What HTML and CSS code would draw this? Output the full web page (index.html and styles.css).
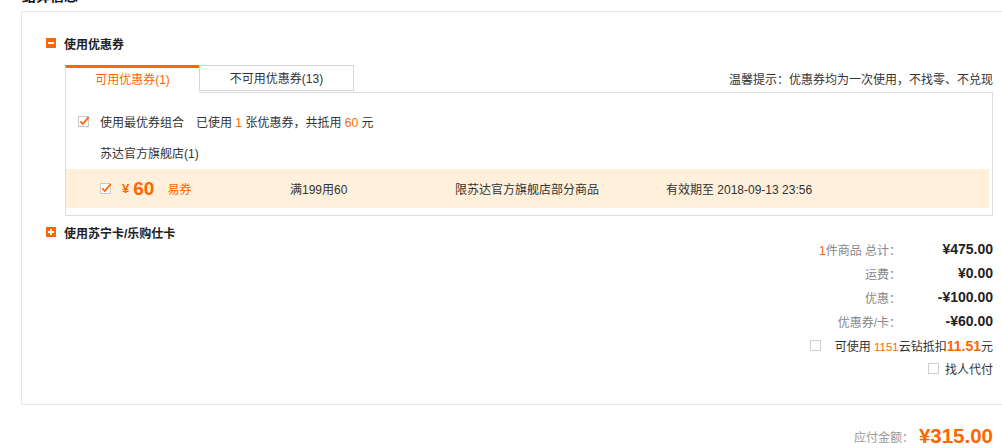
FILE: index.html
```html
<!DOCTYPE html>
<html lang="zh-CN">
<head>
<meta charset="utf-8">
<title>结算信息</title>
<link rel="stylesheet" href="styles.css">
</head>
<body>
<div class="page">
  <h2 class="page-title">结算信息</h2>
  <div class="panel">
    <div class="panel-inner">
      <div class="sec-head sec-first"><span class="ico ico-minus"></span>使用优惠券</div>
      <div class="coupon">
        <div class="tabs-row">
          <div class="tab tab-active">可用优惠券(1)</div>
          <div class="tab tab-idle">不可用优惠券(13)</div>
          <div class="tip">温馨提示：优惠券均为一次使用，不找零、不兑现</div>
        </div>
        <div class="tab-body">
          <div class="best-row">
            <svg class="cb" width="12" height="13" viewBox="0 0 12 13"><rect x="0.5" y="1.5" width="10" height="10" fill="#fff" stroke="#c8c8c8"/><path d="M2.3 6.4 L4.8 9 L10.6 2.2" stroke="#f60" stroke-width="1.8" fill="none"/></svg>
            <span class="best-txt">使用最优券组合</span>
            <span class="used">已使用 <em>1</em> 张优惠券，共抵用 <em>60</em> 元</span>
          </div>
          <div class="shop">苏达官方旗舰店(1)</div>
          <div class="coupon-item">
            <div class="ci-main">
              <svg class="cb" width="12" height="13" viewBox="0 0 12 13"><rect x="0.5" y="1.5" width="10" height="10" fill="#fff" stroke="#c8c8c8"/><path d="M2.3 6.4 L4.8 9 L10.6 2.2" stroke="#f60" stroke-width="1.8" fill="none"/></svg>
              <span class="ci-yen">¥</span><span class="ci-amt">60</span><span class="ci-type">易券</span>
            </div>
            <div>满199用60</div>
            <div>限苏达官方旗舰店部分商品</div>
            <div>有效期至 2018-09-13 23:56</div>
          </div>
        </div>
      </div>
      <div class="sec-head sec-second"><span class="ico ico-plus"></span>使用苏宁卡/乐购仕卡</div>
      <div class="summary">
        <div class="sum-row"><span class="label"><em>1</em>件商品 总计：</span><span class="value">¥475.00</span></div>
        <div class="sum-row"><span class="label">运费：</span><span class="value">¥0.00</span></div>
        <div class="sum-row"><span class="label">优惠：</span><span class="value">-¥100.00</span></div>
        <div class="sum-row"><span class="label">优惠券/卡：</span><span class="value">-¥60.00</span></div>
        <div class="opt-row"><span class="box"></span><span class="opt-txt">可使用 <em class="small">1151</em>云钻抵扣<em class="big">11.51</em>元</span></div>
        <div class="opt-row opt-last"><span class="box"></span><span class="opt-txt">找人代付</span></div>
      </div>
    </div>
  </div>
  <div class="pay-total"><span class="pay-label">应付金额：</span><strong class="pay-amt">¥315.00</strong></div>
</div>
</body>
</html>
```

FILE: styles.css
```css
html, body {
  margin: 0;
  padding: 0;
  background: #fff;
  overflow: hidden;
}
body {
  font-family: "Liberation Sans", "Noto Sans CJK SC", sans-serif;
  font-size: 12px;
  color: #333;
}
em {
  font-style: normal;
}
.page {
  margin-top: -12px;
  padding-left: 21px;
}
.page-title {
  margin: 0 0 7px 1px;
  height: 16px;
  font-size: 14px;
  line-height: 16px;
  font-weight: bold;
  color: #111;
}
.panel {
  border: 1px solid #e8e8e8;
  width: 1000px;
  height: 392px;
}
.panel-inner {
  margin-left: 24px;
  width: 947px;
}
.sec-head {
  display: flex;
  align-items: center;
  height: 20px;
  font-weight: bold;
  color: #222;
}
.sec-first {
  padding-top: 21px;
}
.sec-second {
  margin-top: 6px;
}
.ico {
  width: 10px;
  height: 10px;
  background: #f60;
  margin-right: 8px;
  position: relative;
  flex: none;
}
.ico::before {
  content: "";
  position: absolute;
  left: 2px;
  top: 4px;
  width: 6px;
  height: 2px;
  background: #fff;
}
.ico-plus::after {
  content: "";
  position: absolute;
  left: 4px;
  top: 2px;
  width: 2px;
  height: 6px;
  background: #fff;
}
.coupon {
  margin-top: 12px;
  margin-left: 19px;
  width: 928px;
}
.tabs-row {
  display: flex;
  align-items: flex-start;
}
.tab {
  text-align: center;
  box-sizing: border-box;
}
.tab-active {
  width: 134px;
  height: 28px;
  border-top: 3px solid #f60;
  border-left: 1px solid #ddd;
  line-height: 24px;
  color: #f60;
  background: #fff;
  margin-bottom: -1px;
  position: relative;
  z-index: 1;
}
.tab-idle {
  width: 155px;
  height: 26px;
  border: 1px solid #d6d6d6;
  padding-top: 2px;
  line-height: 22px;
  color: #333;
}
.tip {
  margin-left: auto;
  padding-top: 5px;
  line-height: 20px;
  color: #333;
}
.tab-body {
  border: 1px solid #ddd;
  padding-bottom: 7px;
}
.best-row {
  display: flex;
  align-items: center;
  height: 20px;
  margin-top: 18px;
  padding-left: 12px;
}
.cb {
  flex: none;
  display: block;
}
.best-txt {
  margin-left: 10px;
}
.used {
  margin-left: 12px;
}
.used em {
  color: #f60;
}
.shop {
  margin-top: 13px;
  height: 20px;
  line-height: 20px;
  padding-left: 34px;
}
.coupon-item {
  margin-top: 5px;
  margin-right: 3px;
  height: 39px;
  background: #fff0db;
  padding-left: 34px;
  display: grid;
  grid-template-columns: 190px 165px 211px 1fr;
  align-items: center;
}
.ci-main {
  display: flex;
  align-items: center;
}
.ci-yen {
  margin-left: 10px;
  font-family: "Liberation Sans", sans-serif;
  font-size: 13px;
  font-weight: bold;
  color: #f60;
}
.ci-amt {
  margin-left: 4px;
  font-family: "Liberation Sans", sans-serif;
  font-size: 19px;
  font-weight: bold;
  color: #f60;
}
.ci-type {
  margin-left: 13px;
  color: #f60;
}
.summary {
  margin-top: -5px;
}
.sum-row {
  display: flex;
  justify-content: flex-end;
  align-items: center;
  height: 24px;
}
.label {
  color: #888;
  text-align: right;
}
.label em {
  color: #f60;
}
.value {
  width: 92px;
  text-align: right;
  font-family: "Liberation Sans", sans-serif;
  font-size: 14px;
  font-weight: bold;
  color: #222;
}
.opt-row {
  display: flex;
  justify-content: flex-end;
  align-items: center;
  height: 24px;
}
.opt-last {
  height: 22px;
}
.box {
  width: 9px;
  height: 9px;
  border: 1px solid #d0d0d0;
  margin-right: 14px;
  flex: none;
}
.opt-last .box {
  margin-right: 6px;
}
.opt-txt {
  color: #333;
}
.opt-txt .small {
  font-family: "Liberation Sans", sans-serif;
  font-size: 11.5px;
  color: #f60;
}
.opt-txt .big {
  font-family: "Liberation Sans", sans-serif;
  font-size: 14px;
  font-weight: bold;
  color: #f60;
}
.pay-total {
  width: 972px;
  margin-top: 19px;
  height: 24px;
  display: flex;
  justify-content: flex-end;
  align-items: center;
}
.pay-label {
  color: #999;
  margin-right: 5px;
}
.pay-amt {
  font-family: "Liberation Sans", sans-serif;
  font-size: 20.5px;
  font-weight: bold;
  color: #f60;
}
```
